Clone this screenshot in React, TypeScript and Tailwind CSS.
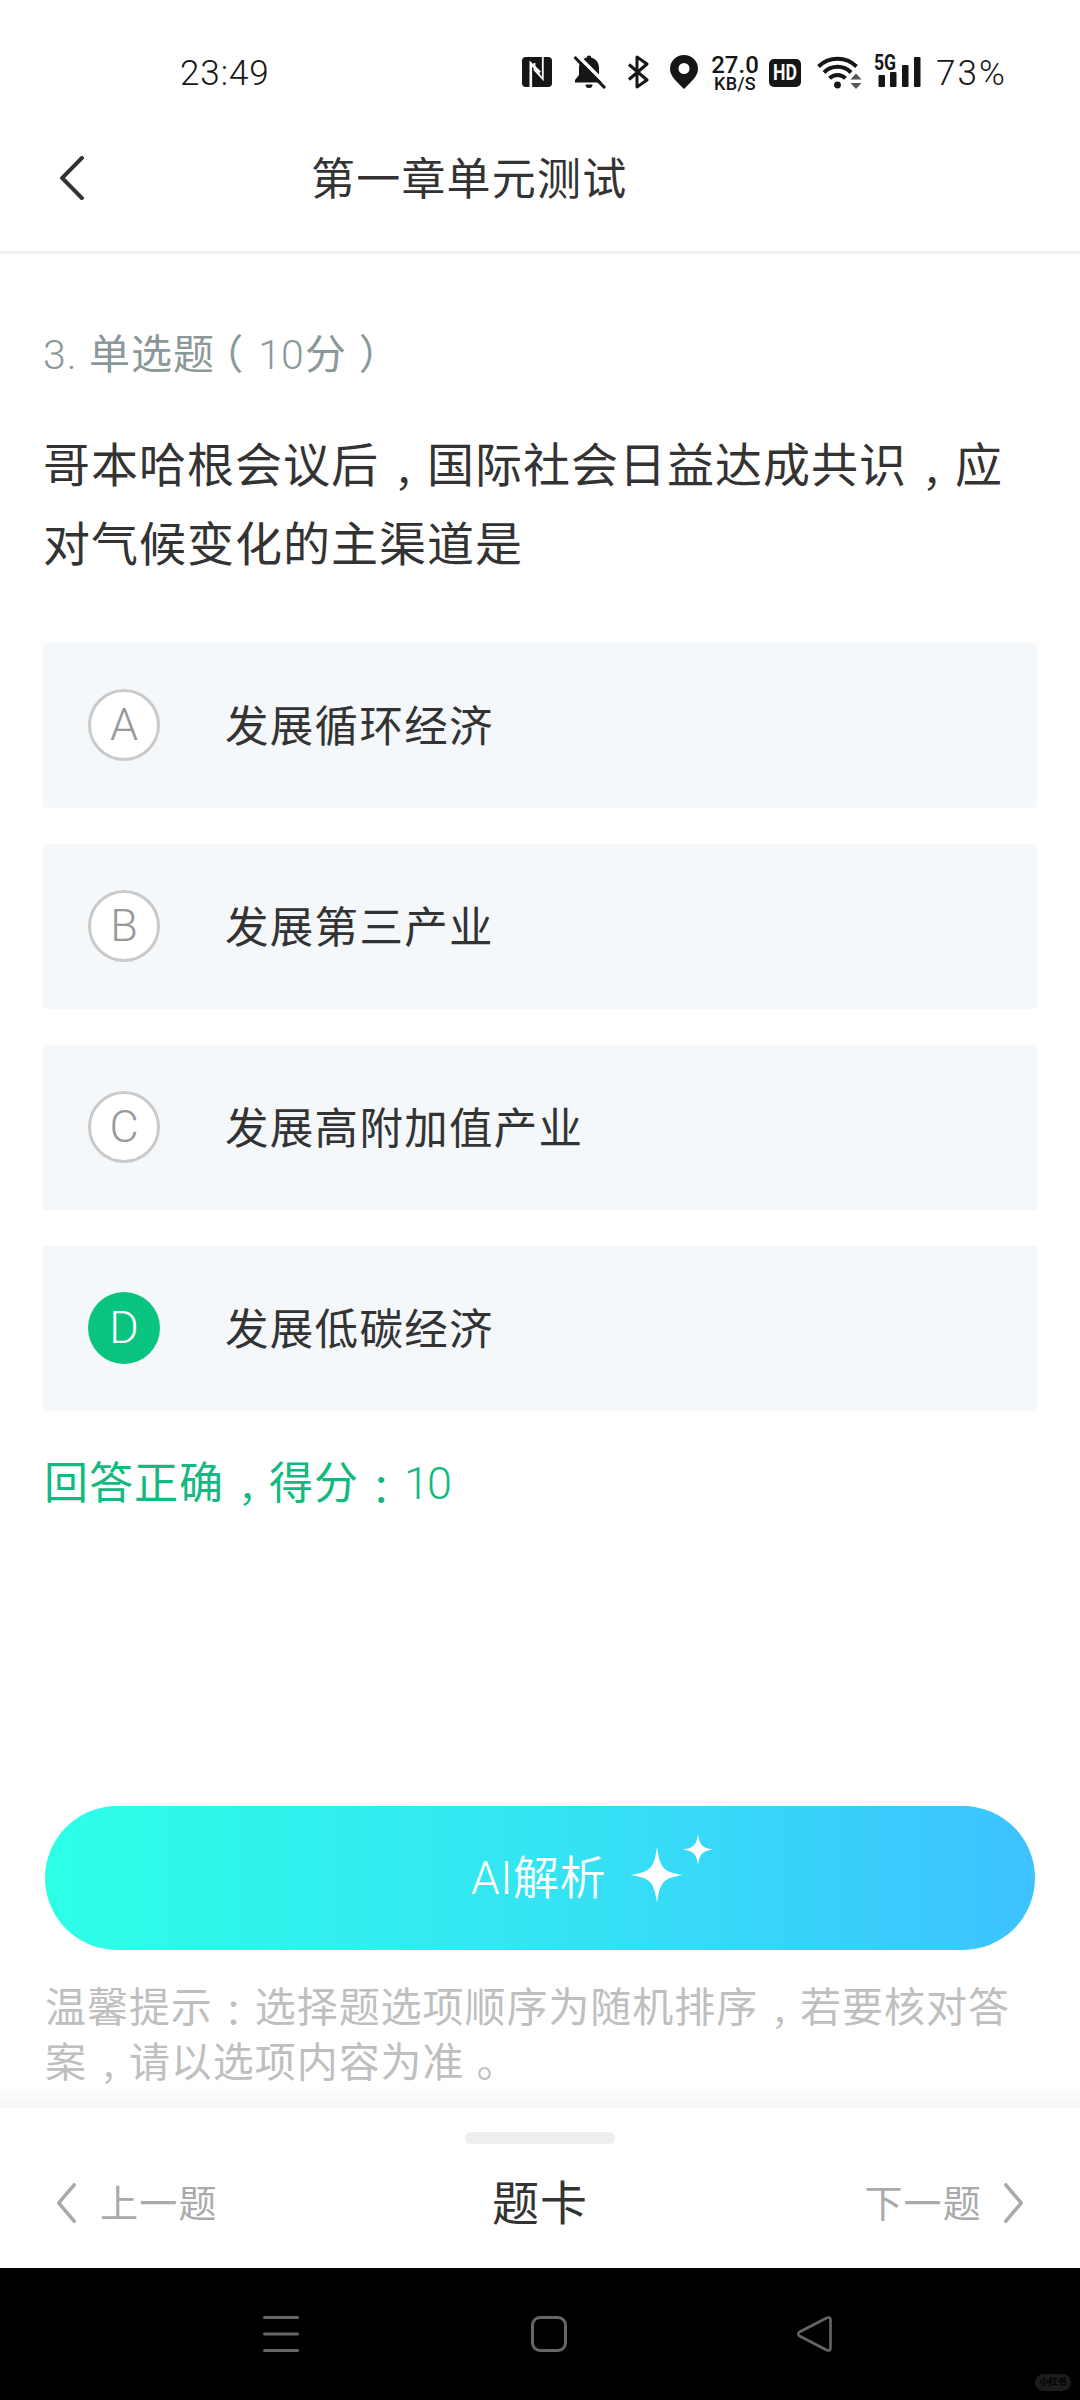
import clsx from "clsx";

const options = [
  { key: "A", text: "发展循环经济", selected: false },
  { key: "B", text: "发展第三产业", selected: false },
  { key: "C", text: "发展高附加值产业", selected: false },
  { key: "D", text: "发展低碳经济", selected: true },
];

const punctStyles: Record<string, string> = {
  "，": "pr-[0.21em] pl-[0.29em] translate-y-[0.13em] scale-85",
  "：": "pr-[0.25em] pl-[0.25em] translate-y-[0.1em] scale-90",
  "（": "pr-[0.31em] pl-[0.19em]",
};

// full-width punctuation centered in its cell (half-width form + padding on both sides)
function Punct({ children }: { children: string }) {
  return (
    <span className={clsx("inline-block [font-feature-settings:'halt']", punctStyles[children] || "pr-[0.21em] pl-[0.29em]")}>
      {children}
    </span>
  );
}

function Chevron({ className, right = false }: { className: string; right?: boolean }) {
  return (
    <svg className={className} viewBox="0 0 22 44" fill="none" stroke="currentColor" strokeWidth="4" strokeLinecap="round" strokeLinejoin="round" preserveAspectRatio="none">
      <path d={right ? "M2 2 L20 22 L2 42" : "M20 2 L2 22 L20 42"} />
    </svg>
  );
}

function StatusBar() {
  return (
    <div className="flex h-[104px] shrink-0 items-center pt-10 text-[#161616]">
      <span className="mt-[3px] ml-[180px] w-[90px] text-[35px] leading-[40px] font-light tracking-[0.9px]">23:49</span>

      {/* nfc */}
      <svg className="ml-[252px] h-[30px] w-[30px] shrink-0" viewBox="0 0 30 30">
        <rect width="30" height="30" rx="4" fill="currentColor" />
        <path d="M8.800 30 V6.500 L18 15.500" fill="none" stroke="#fff" strokeWidth="2.6" />
        <path d="M12.500 6 V13 L18 18.500 M12.500 13 L20.800 22 V0" fill="none" stroke="#fff" strokeWidth="1.8" />
      </svg>

      {/* muted bell */}
      <svg className="ml-[21px] h-[34px] w-[34px] shrink-0" viewBox="0 0 34 34">
        <path d="M16 0.500 a2.400 2.400 0 0 1 2.400 2.200 C23.500 4 26 8 26 13 V20 L30.500 25 V27.500 H2 V25 L6 20 V13 C6 8 8.500 4 13.600 2.700 A2.400 2.400 0 0 1 16 0.500 Z" fill="currentColor" />
        <path d="M12.500 29.500 h7 a3.500 3.500 0 0 1 -7 0 Z" fill="currentColor" />
        <path d="M3 -1 L35 31" stroke="#fff" strokeWidth="3.500" />
        <path d="M1.500 2 L32 33" stroke="currentColor" strokeWidth="3" />
      </svg>

      {/* bluetooth */}
      <svg className="ml-[21px] h-[34px] w-[21px] shrink-0" viewBox="0 0 21 34" fill="none" stroke="currentColor" strokeWidth="3" strokeLinejoin="round">
        <path d="M1 9.500 L19 25 L9 32 V2 L19 9 L1 24.500" />
      </svg>

      {/* location */}
      <svg className="ml-[21px] h-[34px] w-7 shrink-0" viewBox="0 0 28 34">
        <path fillRule="evenodd" fill="currentColor" d="M14 0 A14 14 0 0 1 28 14 C28 22 19 28.500 14 34 C9 28.500 0 22 0 14 A14 14 0 0 1 14 0 Z M14 8 a5.500 5.500 0 1 0 0 11 a5.500 5.500 0 0 0 0 -11 Z" />
      </svg>

      <div className="ml-[12px] flex w-[50px] shrink-0 flex-col items-center pt-[4px] font-medium">
        <span className="text-[24px] leading-[19px]">27.0</span>
        <span className="text-[18px] leading-[18px] tracking-[0.3px]">KB/S</span>
      </div>

      <div className="mt-[2px] ml-[9px] flex h-7 w-8 shrink-0 items-center justify-center rounded-[5px] bg-[#161616] text-[22px] leading-7 font-bold text-white">
        <span className="scale-x-[0.8]">HD</span>
      </div>

      {/* wifi with traffic arrows */}
      <svg className="ml-4 h-[34px] w-[46px] shrink-0" viewBox="0 0 46 34">
        <g fill="none" stroke="currentColor" strokeWidth="4">
          <path d="M1.500 11.500 A27 27 0 0 1 39.500 11.500" />
          <path d="M7 17.500 A19 19 0 0 1 34 17.500" />
          <path d="M12.500 23.200 A11.500 11.500 0 0 1 28.500 23.200" />
        </g>
        <circle cx="20.500" cy="30" r="3.400" fill="currentColor" />
        <path d="M39 18.500 l5.500 6 h-11 Z M39 34 l5.500 -6 h-11 Z" fill="#555" />
      </svg>

      {/* signal */}
      <div className="relative ml-[11px] h-[32px] w-[47px] shrink-0">
        <svg className="h-[32px] w-[47px]" viewBox="0 0 47 32" fill="currentColor">
          <rect x="4.500" y="19" width="6.500" height="12" rx="1" />
          <rect x="16" y="16" width="6.500" height="15" rx="1" />
          <rect x="28" y="9" width="6.500" height="22" rx="1" />
          <rect x="40" y="1" width="6.500" height="30" rx="1" />
        </svg>
        <span className="absolute -top-[1px] left-0 origin-left scale-x-[0.8] text-[22px] leading-[16px] font-bold">5G</span>
      </div>

      <span className="mt-[3px] ml-[15px] text-[35px] leading-[40px] font-light tracking-[2.1px]">73%</span>
    </div>
  );
}

function NavBar() {
  return (
    <div className="relative h-[132px] shrink-0 bg-black text-[#666]">
      <div className="flex h-[132px] items-center">
        <svg className="ml-[263px] h-9 w-9" viewBox="0 0 36 36" stroke="currentColor" strokeWidth="3" strokeLinecap="round">
          <path d="M1.500 1.500 H34.500 M1.500 18 H34.500 M1.500 34.500 H34.500" />
        </svg>
        <div className="ml-[232px] h-9 w-9 rounded-[9px] border-[3px] border-[#666]" />
        <svg className="ml-[230px] h-9 w-9" viewBox="0 0 36 36" fill="none" stroke="currentColor" strokeWidth="2.600" strokeLinejoin="round">
          <path d="M2.500 16 L29.500 2 Q33.500 0.500 33.500 4 V32 Q33.500 35.500 29.500 34 L2.500 20 Q0 18 2.500 16 Z" />
        </svg>
      </div>
      <span className="absolute top-[106px] left-[1035px] flex h-[17px] w-9 items-center justify-center rounded-full bg-[#1c1c1c] text-[9px] leading-none font-bold text-black">
        小红书
      </span>
    </div>
  );
}

export default function App() {
  return (
    <div className="flex h-[2400px] w-[1080px] flex-col overflow-hidden bg-white font-['Roboto','Noto_Sans_CJK_SC',sans-serif] whitespace-nowrap text-[#333]">
      <StatusBar />

      <header className="flex h-[150px] shrink-0 items-center border-b-[3px] border-[#f0f0f0] pl-[60px]">
        <Chevron className="h-[44px] w-[24px]" />
        <h1 className="mt-[4px] ml-[227px] text-[44px] leading-[60px] tracking-[1.2px]">第一章单元测试</h1>
      </header>

      <main className="flex min-h-0 flex-1 flex-col px-[43px]">
        <p className="mt-[71px] flex text-[41px] leading-[60px] tracking-[1px] text-[#8b9899]">
          <span className="w-[46px] font-[350]">3.</span>
          <span>单选题</span>
          <Punct>（</Punct>
          <span className="w-[48px] text-center font-[350] tracking-normal">10</span>
          <span>分</span>
          <Punct>）</Punct>
        </p>

        <p className="mt-[41px] text-[47px] leading-[79px] tracking-[1px]">
          哥本哈根会议后<Punct>，</Punct>国际社会日益达成共识<Punct>，</Punct>应
          <br />
          对气候变化的主渠道是
        </p>

        <ul className="mt-[59px] flex flex-col gap-9">
          {options.map((o) => (
            <li key={o.key} className="flex h-[165px] w-[994px] items-center rounded-[3px] bg-[#f4f8fb] pl-[45px]">
              <span
                className={clsx(
                  "mb-px flex h-[72px] w-[72px] items-center justify-center rounded-full text-[45px] font-[350]",
                  o.selected ? "bg-[#08c47f] text-white" : "border-[3px] border-[#cacaca] bg-white text-[#999]"
                )}
              >
                {o.key}
              </span>
              <span className="mt-[4px] ml-[65px] text-[43.500px] leading-[60px] tracking-[1.3px]">{o.text}</span>
            </li>
          ))}
        </ul>

        <p className="mt-[43px] ml-[1px] text-[44px] leading-[60px] tracking-[1px] text-[#14b881]">
          回答正确<Punct>，</Punct>得分<Punct>：</Punct>
          <span className="text-[45px] font-[350] tracking-[-2px]">10</span>
        </p>

        <button className="mt-[292px] ml-[2px] flex h-[144px] w-[990px] shrink-0 rounded-full bg-linear-to-r from-[#2dffe6] via-[#34e4f3] to-[#3dc2ff] text-white">
          <span className="mt-[42px] ml-[426px] text-[46px] leading-[60px] font-[350] tracking-[0.5px]">AI解析</span>
          <svg className="mt-[27px] ml-[23px] h-[72px] w-[84px]" viewBox="0 0 84 72" fill="currentColor">
            <path d="M28 14 C31 35 34 39 54 42 C34 45 31 49 28 70 C25 49 22 45 1 42 C22 39 25 35 28 14 Z" />
            <path d="M69 1 C70.500 12 73 15 84 16.500 C73 18 70.500 21 69 32 C67.500 21 65 18 54 16.500 C65 15 67.500 12 69 1 Z" />
          </svg>
        </button>

        <p className="mt-[31px] ml-[2px] text-[41px] leading-[55px] tracking-[0.95px] text-[#bfbfbf]">
          温馨提示<Punct>：</Punct>选择题选项顺序为随机排序<Punct>，</Punct>若要核对答
          <br />
          案<Punct>，</Punct>请以选项内容为准<Punct>。</Punct>
        </p>
      </main>

      <div className="h-[24px] shrink-0 bg-linear-to-b from-transparent to-[#f6f6f6]" />

      <footer className="flex h-[160px] shrink-0 flex-col items-center bg-white pt-6">
        <div className="h-3 w-[150px] rounded-full bg-[#eee]" />
        <div className="mt-[29px] flex h-[60px] w-full items-center justify-between pr-[57px] pl-[57px] text-[38px] leading-[60px] tracking-[1.2px] text-[#aaa]">
          <div className="flex w-[300px] items-center">
            <Chevron className="h-[40px] w-[19px]" />
            <span className="mt-[2px] ml-[24px]">上一题</span>
          </div>
          <span className="mt-[1px] text-[47px] tracking-[1px] text-[#333]">题卡</span>
          <div className="flex w-[300px] items-center justify-end">
            <span className="mt-[2px] mr-[22px]">下一题</span>
            <Chevron className="h-[40px] w-[19px]" right />
          </div>
        </div>
      </footer>

      <NavBar />
    </div>
  );
}
